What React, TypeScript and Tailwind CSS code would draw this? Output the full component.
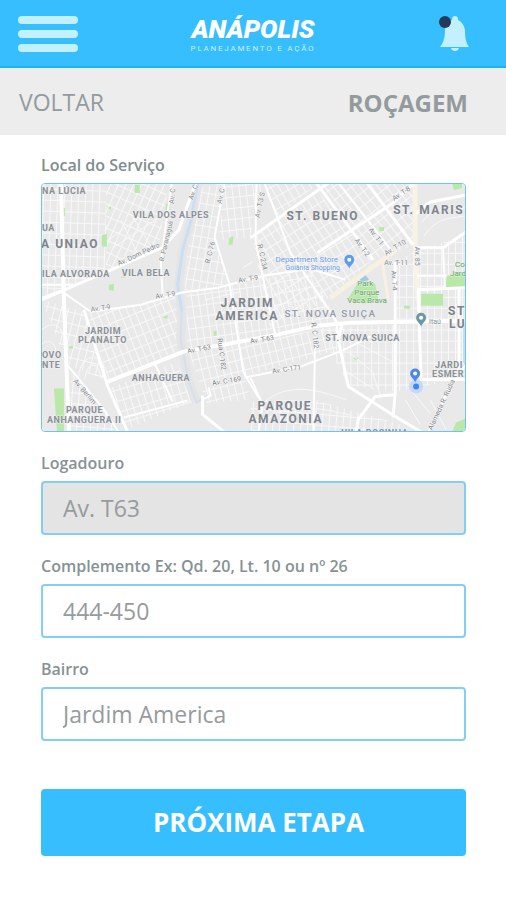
import { useId } from "react";

type Street = { d: string; w?: number; c?: string };
type MapLabel = {
  x: number;
  y: number;
  text: string;
  kind: string;
  rotate?: number;
};

const streets: Street[] = [
  { d: "M330 298L377 264L396 250", w: 5, c: "#f7f1e2" },
  { d: "M415 183V243L418 300", w: 5, c: "#f8f3e6" },
  { d: "M382 262L388 300", w: 3, c: "#f7f1e2" },
  { d: "M60 183L63 300L68 433", w: 4 },
  { d: "M41 300L117 267L163 247L178 230L195 183", w: 3 },
  { d: "M41 285H75" },
  { d: "M41 298L60 291L90 312L140 305L180 293L217 288L263 276L310 269L345 280" },
  { d: "M107 382L183 352L223 345L277 335L317 326L350 323L466 321", w: 4 },
  { d: "M83 310L107 387L127 433", w: 3 },
  { d: "M66 365L103 410L118 433" },
  { d: "M153 362L172 402" },
  { d: "M123 418L187 401" },
  { d: "M202 396V415L224 433", w: 3 },
  { d: "M202 400L210 396L208 388" },
  { d: "M171 183L160 262L162 296" },
  { d: "M224 183L214 237L229 285L243 373L258 398" },
  { d: "M250 238L318 190L328 183", w: 3 },
  { d: "M317 253L393 203L414 183", w: 3 },
  { d: "M316 183L373 260", w: 3 },
  { d: "M338 183L393 253" },
  { d: "M367 183L413 245", w: 3 },
  { d: "M417 248H443L466 232", w: 3 },
  { d: "M443 248L445 290" },
  { d: "M416 214L430 202L466 195", w: 3 },
  { d: "M417 290L466 288", w: 3 },
  { d: "M417 276H446" },
  { d: "M264 183L290 253L322 300L337 323V340", w: 2 },
  { d: "M256 183L255 240L267 300L275 335" },
  { d: "M395 262V393L393 418", w: 3 },
  { d: "M418 290L421 380", w: 3 },
  { d: "M244 378L300 367L342 351L372 336" },
  { d: "M342 323L338 340L348 387L400 420L422 433", w: 3 },
  { d: "M315 330L313 433" },
  { d: "M395 395L375 397L358 420L356 433", w: 3 },
  { d: "M420 380H466", w: 3 },
  { d: "M466 365L450 387L428 433" },
  { d: "M459 290V380", w: 3 },
  { d: "M250 378L262 405L258 433" },
];

const sideStreets: string[] = [
  "M41 330C56 318 63 330 63 345M41 344C52 336 60 352 50 358",
  "M78 378C78 352 104 352 104 374M84 380C86 360 98 362 100 378",
  "M108 240L146 212M112 248L158 218M120 220L138 256M130 214L150 246",
  "M348 352L372 372L380 396M358 344L392 362M346 372L374 390",
  "M252 262L242 268M205 300L240 292M208 316L242 308",
  "M422 222C430 210 446 208 466 208M424 236C436 218 450 218 466 216",
  "M262 404C290 380 320 392 346 400M266 420C290 402 316 408 352 416",
  "M405 400L420 425M412 392L430 414M430 400L446 430",
];

const districts = [
  { points: "41,183 105,183 105,270 41,298", angle: 2 },
  { points: "105,183 168,183 158,248 117,267 105,270", angle: 24 },
  { points: "190,190 224,183 214,237 230,284 184,292", angle: 10 },
  { points: "224,183 262,183 250,238 218,240", angle: -6 },
  { points: "262,183 318,183 276,218", angle: -30 },
  { points: "252,238 318,192 372,260 330,298 270,330", angle: -32 },
  { points: "320,183 415,183 415,245 374,260", angle: -38 },
  { points: "41,300 83,312 107,382 66,365", angle: 14 },
  { points: "86,314 176,296 181,350 108,380", angle: -22 },
  { points: "110,388 176,362 192,402 126,430", angle: -17 },
  { points: "186,294 262,278 275,334 187,350", angle: -8 },
  { points: "188,352 275,337 344,326 340,350 244,376 250,400 206,404", angle: -14 },
  { points: "268,278 310,270 338,322 277,333", angle: -11 },
  { points: "318,328 466,323 466,378 396,392 348,386", angle: 0 },
  { points: "418,250 466,236 466,320 396,320 396,262", angle: 0 },
  { points: "250,402 312,400 398,424 410,433 250,433", angle: 5 },
  { points: "70,372 106,412 114,433 70,433", angle: 5 },
];

const greens = [
  "M134 185h5v8h-5z",
  "M61 208h3v8h-3z",
  "M101 235l5 -1v13h-5z",
  "M107 208l3 -2v4z",
  "M165 204l4 -1v7h-4z",
  "M229 238l4 -2l-1 9h-4z",
  "M108 285l5 -1v7l-5 -1z",
  "M120 278l4 -2v2z",
  "M162 318l5 -3v4z",
  "M213 332l3 -1v5h-3z",
  "M68 347l4 -1v3h-4z",
  "M53 389h10v44h-7z",
  "M379 227h5v4h-5z",
  "M452 183h10v5l-8 2z",
  "M347 300l10 -16l8 -4l10 4l3 16l-14 4z",
  "M447 276l19 -3v15l-21 1z",
  "M421 294h22v12h-22z",
  "M404 306h6v3h-6z",
  "M354 358h4v2h-4z",
  "M452 433l4 -10l10 -4v14z",
];

const labels: MapLabel[] = [
  { x: 41, y: 194, text: "NA LÚCIA", kind: "small" },
  { x: 132, y: 218, text: "VILA DOS ALPES", kind: "small" },
  { x: 41, y: 231, text: "UA", kind: "small" },
  { x: 40, y: 248, text: "A UNIAO", kind: "medium" },
  { x: 41, y: 277, text: "ILA ALVORADA", kind: "small" },
  { x: 121, y: 276, text: "VILA BELA", kind: "small" },
  { x: 286, y: 220, text: "ST. BUENO", kind: "medium" },
  { x: 393, y: 214, text: "ST. MARIS", kind: "medium" },
  { x: 220, y: 307, text: "JARDIM", kind: "medium" },
  { x: 215, y: 320, text: "AMERICA", kind: "medium" },
  { x: 284, y: 317, text: "ST. NOVA SUIÇA", kind: "soft" },
  { x: 325, y: 341, text: "ST. NOVA SUICA", kind: "small" },
  { x: 84, y: 334, text: "JARDIM", kind: "small" },
  { x: 77, y: 343, text: "PLANALTO", kind: "small" },
  { x: 41, y: 358, text: "OVO", kind: "small" },
  { x: 41, y: 368, text: "NTE", kind: "small" },
  { x: 131, y: 381, text: "ANHAGUERA", kind: "small" },
  { x: 65, y: 414, text: "PARQUE", kind: "small" },
  { x: 46, y: 424, text: "ANHANGUERA II", kind: "small" },
  { x: 257, y: 411, text: "PARQUE", kind: "medium" },
  { x: 248, y: 424, text: "AMAZONIA", kind: "medium" },
  { x: 448, y: 315, text: "ST", kind: "medium" },
  { x: 449, y: 328, text: "LU", kind: "medium" },
  { x: 435, y: 368, text: "JARDI", kind: "small" },
  { x: 432, y: 377, text: "ESMER", kind: "small" },
  { x: 341, y: 437, text: "VILA ROSINHA", kind: "small" },
  { x: 118, y: 266, text: "Av. Dom Pedro", kind: "road", rotate: -25 },
  { x: 163, y: 262, text: "R. Paranaguá", kind: "road", rotate: -77 },
  { x: 173, y: 204, text: "Av. C", kind: "road", rotate: -84 },
  { x: 192, y: 200, text: "Av. C", kind: "road", rotate: -70 },
  { x: 221, y: 204, text: "Av. C", kind: "road", rotate: -78 },
  { x: 209, y: 264, text: "R. C-76", kind: "road", rotate: -76 },
  { x: 155, y: 299, text: "Av. T-9", kind: "road", rotate: -9 },
  { x: 90, y: 312, text: "Av. T-9", kind: "road", rotate: -8 },
  { x: 238, y: 283, text: "Av. T-9", kind: "road", rotate: -9 },
  { x: 187, y: 354, text: "Av. T-63", kind: "road", rotate: -11 },
  { x: 250, y: 344, text: "Av. T-63", kind: "road", rotate: -9 },
  { x: 212, y: 386, text: "Av. C-169", kind: "road", rotate: -9 },
  { x: 272, y: 374, text: "Av. C-171", kind: "road", rotate: -8 },
  { x: 72, y: 382, text: "Av. Berlim", kind: "road", rotate: 49 },
  { x: 217, y: 339, text: "Rua C-182", kind: "road", rotate: 83 },
  { x: 259, y: 218, text: "Av. T-3 S", kind: "road", rotate: -78 },
  { x: 257, y: 245, text: "R. C-234", kind: "road", rotate: 78 },
  { x: 354, y: 241, text: "Av. T-2", kind: "road", rotate: 53 },
  { x: 368, y: 230, text: "Av. T-1", kind: "road", rotate: 53 },
  { x: 394, y: 201, text: "Av. T-8", kind: "road", rotate: -34 },
  { x: 386, y: 256, text: "Av. T-10", kind: "road", rotate: -32 },
  { x: 384, y: 265, text: "Av. T-11", kind: "road" },
  { x: 391, y: 271, text: "Av. T-4", kind: "road", rotate: 86 },
  { x: 415, y: 247, text: "Av. 85", kind: "road", rotate: 90 },
  { x: 311, y: 323, text: "R. C-182", kind: "road", rotate: 84 },
  { x: 432, y: 431, text: "Alameda R. Rudia", kind: "road", rotate: -65 },
  { x: 275, y: 262, text: "Department Store", kind: "store" },
  { x: 285, y: 270, text: "Goiânia Shopping", kind: "storeSmall" },
  { x: 357, y: 286, text: "Park", kind: "park" },
  { x: 354, y: 295, text: "Parque", kind: "park" },
  { x: 347, y: 303, text: "Vaca Brava", kind: "park" },
  { x: 455, y: 267, text: "Co", kind: "park" },
  { x: 450, y: 276, text: "Jard", kind: "park" },
  { x: 429, y: 324, text: "Itaú", kind: "shop" },
];

const labelClass: Record<string, string> = {
  medium: "text-[12px] font-bold tracking-[0.13em] fill-[#7e848b] stroke-[#f1f1f2]",
  small: "text-[9px] font-bold tracking-[0.06em] fill-[#8b9097] stroke-[#f1f1f2]",
  soft: "text-[10px] font-medium tracking-[0.13em] fill-[#969ba6] stroke-[#f1f1f2]",
  road: "text-[7px] fill-[#85888c] stroke-[#f7f7f7]",
  store: "text-[8px] fill-[#6d9bdc] stroke-[#f4f6fa]",
  storeSmall: "text-[7px] fill-[#6d9bdc] stroke-[#f4f6fa]",
  park: "text-[8px] fill-[#63a06b] stroke-[#e4f3e0]",
  shop: "text-[7px] fill-[#86969b] stroke-[#f7f7f7]",
};

function Pin({ x, y, color }: { x: number; y: number; color: string }) {
  return (
    <g transform={`translate(${x} ${y})`}>
      <path d="M0 7C-1 3-5 2-5-2A5 5 0 0 1 5-2C5 2 1 3 0 7Z" fill={color} />
      <circle cy="-2" r="2" fill="#fff" />
    </g>
  );
}

function ServiceMap() {
  const id = useId();
  return (
    <svg
      viewBox="41 184 424 248"
      role="img"
      aria-label="Mapa do local do serviço"
      className="block h-auto w-full font-[Roboto,sans-serif]"
    >
      <defs>
        {districts.map((area, i) => (
          <pattern
            key={i}
            id={`${id}-${i}`}
            width="7"
            height="11"
            patternUnits="userSpaceOnUse"
            patternTransform={`rotate(${area.angle})`}
          >
            <path d="M0 0H7M0 0V11" stroke="#f8f8f9" strokeWidth="2" />
          </pattern>
        ))}
      </defs>
      <rect x="41" y="183" width="426" height="250" fill="#e9e9ea" />
      {districts.map((area, i) => (
        <polygon key={i} points={area.points} fill={`url(#${id}-${i})`} />
      ))}
      <path
        d="M197 183L190 222L182 250L178 285L181 320L180 340L188 382L196 403"
        fill="none"
        stroke="#e3e5e8"
        strokeWidth="9"
      />
      <path
        d="M197 183L190 222L182 250L177 285L181 312"
        fill="none"
        stroke="#cbdff2"
        strokeWidth="3"
      />
      <path
        d="M181 312L180 340L188 382L196 403L207 396"
        fill="none"
        stroke="#d8dfe8"
        strokeWidth="2"
      />
      <path d="M463 324h4v50l-4 -12z" fill="#bfe0f3" />
      {greens.map((d) => (
        <path key={d} d={d} fill="#b9e8a8" />
      ))}
      <path d="M358 278l6 -4l5 6l-8 2z" fill="#9ccbea" />
      <g fill="none" stroke="#f8f8f9" strokeWidth="1">
        {sideStreets.map((d) => (
          <path key={d} d={d} />
        ))}
      </g>
      <g fill="none" strokeLinejoin="round">
        {streets.map((s) => (
          <path key={s.d} d={s.d} stroke={s.c ?? "#fff"} strokeWidth={s.w ?? 2} />
        ))}
      </g>
      <g strokeWidth="1" paintOrder="stroke">
        {labels.map((l) => (
          <text
            key={`${l.text}-${l.x}-${l.y}`}
            x={l.x}
            y={l.y}
            transform={l.rotate ? `rotate(${l.rotate} ${l.x} ${l.y})` : undefined}
            className={labelClass[l.kind]}
          >
            {l.text}
          </text>
        ))}
      </g>
      <Pin x={349} y={262} color="#5b9bf0" />
      <Pin x={421} y={320} color="#6c98a3" />
      <circle cx="416" cy="387" r="7" fill="#c3d8fa" />
      <circle cx="416" cy="387" r="3" fill="#3f86f5" />
      <Pin x={415} y={376} color="#4b86f2" />
    </svg>
  );
}

function Field({
  id,
  label,
  value,
  readOnly,
}: {
  id: string;
  label: string;
  value: string;
  readOnly?: boolean;
}) {
  return (
    <div className="flex flex-col gap-2">
      <label htmlFor={id} className="text-base leading-5 font-semibold text-[#869295]">
        {label}
      </label>
      <input
        id={id}
        type="text"
        defaultValue={value}
        readOnly={readOnly}
        className="h-[54px] w-full rounded-[4px] border-2 border-[#84cdf6] bg-white px-5 text-[23px] text-[#969b9d] outline-none read-only:bg-[#e4e4e4]"
      />
    </div>
  );
}

export default function App() {
  return (
    <div className="min-h-screen bg-white font-['Open_Sans','Noto_Sans',sans-serif]">
      <header className="flex h-[68px] items-center justify-between border-b-2 border-[#18b3f5] bg-[#37beff] pt-0.5 pr-9 pl-[18px]">
        <button type="button" aria-label="Menu" className="flex w-15 flex-col gap-[6px]">
          <span className="h-2 rounded-full bg-[#c2f0ff]" />
          <span className="h-2 rounded-full bg-[#c2f0ff]" />
          <span className="h-2 rounded-full bg-[#c2f0ff]" />
        </button>
        <div className="flex flex-col items-center text-white">
          <span className="font-[Roboto,sans-serif] text-[26px] leading-[30px] font-black italic">
            ANÁPOLIS
          </span>
          <span className="font-[Roboto,sans-serif] text-[8px] leading-[10px] tracking-[0.22em] text-[#c8efff]">
            PLANEJAMENTO E AÇÃO
          </span>
        </div>
        <button type="button" aria-label="Notificações" className="flex w-[42px] justify-end">
          <svg viewBox="0 0 32 36" className="h-9 w-8">
            <path
              d="M17 0c2 0 3 1 3 4c4 2 6 5 7 10c0 9 1 12 4 17H2c3-4 5-8 5-17c1-5 3-8 7-10c0-3 1-4 3-4z"
              fill="#c2f0ff"
            />
            <path d="M13 32h8c-1 4-7 4-8 0z" fill="#c2f0ff" />
            <circle cx="7" cy="6" r="6" fill="#233a5a" />
          </svg>
        </button>
      </header>
      <div className="flex h-[67px] items-center justify-between bg-[#ededed] pt-0.5 pr-[38px] pl-[19px] text-[#939b9d]">
        <button type="button" className="text-[23px]">
          VOLTAR
        </button>
        <h1 className="text-2xl font-bold">ROÇAGEM</h1>
      </div>
      <main className="flex flex-col gap-[21px] pt-5 pr-10 pb-10 pl-[41px]">
        <section className="flex flex-col gap-2">
          <h2 className="text-base leading-5 font-semibold text-[#7f8d90]">Local do Serviço</h2>
          <div className="overflow-hidden rounded-[4px] border border-[#6cc3f4]">
            <ServiceMap />
          </div>
        </section>
        <Field id="logadouro" label="Logadouro" value="Av. T63" readOnly />
        <Field id="complemento" label="Complemento Ex: Qd. 20, Lt. 10 ou nº 26" value="444-450" />
        <Field id="bairro" label="Bairro" value="Jardim America" />
        <button
          type="button"
          className="mt-[27px] h-[67px] rounded-[4px] bg-[#37beff] pl-2.5 text-[26px] font-bold text-white"
        >
          PRÓXIMA ETAPA
        </button>
      </main>
    </div>
  );
}
